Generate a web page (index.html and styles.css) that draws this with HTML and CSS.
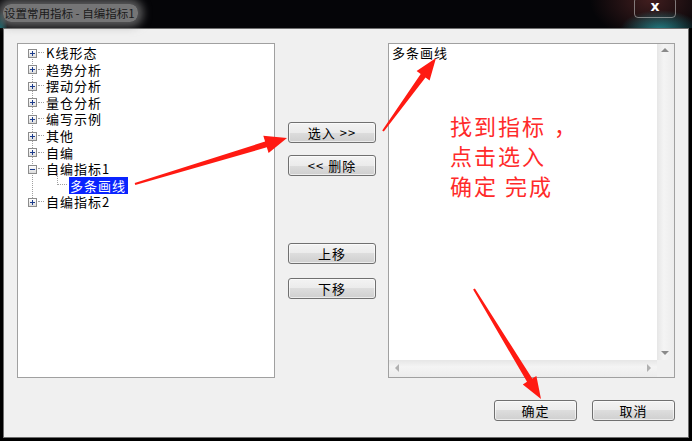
FILE: index.html
```html
<!DOCTYPE html>
<html lang="zh-CN">
<head>
  <meta charset="UTF-8">
  <meta name="viewport" content="width=device-width, initial-scale=1.0">
  <title>设置常用指标 - 自编指标1</title>
  <link rel="stylesheet" href="styles.css">
</head>
<body>
<div class="titlebar">
  <span class="title">设置常用指标 - 自编指标1</span>
  <div class="close-btn">x</div>
</div>

<div class="window">
  <div class="main-row">
    <!-- albero degli indicatori -->
    <div class="tree-box">
      <ul class="tree">
        <li><span class="exp plus"></span><span class="dash"></span><span class="label">K线形态</span></li>
        <li><span class="exp plus"></span><span class="dash"></span><span class="label">趋势分析</span></li>
        <li><span class="exp plus"></span><span class="dash"></span><span class="label">摆动分析</span></li>
        <li><span class="exp plus"></span><span class="dash"></span><span class="label">量仓分析</span></li>
        <li><span class="exp plus"></span><span class="dash"></span><span class="label">编写示例</span></li>
        <li><span class="exp plus"></span><span class="dash"></span><span class="label">其他</span></li>
        <li><span class="exp plus"></span><span class="dash"></span><span class="label">自编</span></li>
        <li><span class="exp minus"></span><span class="dash"></span><span class="label">自编指标1</span></li>
        <li class="child"><span class="elbow"></span><span class="label selected">多条画线</span></li>
        <li><span class="exp plus"></span><span class="dash"></span><span class="label">自编指标2</span></li>
      </ul>
    </div>

    <div class="mid-buttons">
      <button class="btn btn-add">选入 &gt;&gt;</button>
      <button class="btn btn-del">&lt;&lt; 删除</button>
      <button class="btn btn-up">上移</button>
      <button class="btn btn-down">下移</button>
    </div>

    <div class="list-box">
      <div class="list-area">
        <div class="list-item">多条画线</div>
        <div class="note">找到指标<span class="comma">，</span><br>点击选入<br>确定 完成</div>
      </div>
      <div class="vscroll">
        <span class="arr arr-up"></span>
        <span class="arr arr-down"></span>
      </div>
      <div class="hscroll">
        <span class="arr arr-left"></span>
        <span class="arr arr-right"></span>
      </div>
      <div class="corner"></div>
    </div>
  </div>

  <div class="bottom-row">
    <button class="btn btn-ok">确定</button>
    <button class="btn btn-cancel">取消</button>
  </div>
</div>

<!-- frecce rosse di annotazione -->
<svg class="arrows" width="692" height="441" viewBox="0 0 692 441">
  <polygon points="135.3,185.0 266.8,147.3 268.6,153.0 287,138 263.3,135.8 265.1,141.5 134.7,183.0" />
  <polygon points="383.8,131.6 425.5,77.6 429.6,80.5 436,58 416.6,71.1 420.7,74.0 382.2,130.4" />
  <polygon points="473.1,289.5 527.0,381.8 522.8,384.4 541,399 536.4,376.0 532.2,378.6 474.9,288.5" />
</svg>
</body>
</html>
```

FILE: styles.css
```css
body {
  margin: 0;
  padding: 0;
  width: 692px;
  height: 441px;
  overflow: hidden;
  background-color: #000;
  font-family: "Noto Sans CJK SC", "DejaVu Sans", sans-serif;
  font-size: 13px;
  color: #000;
  position: relative;
}

.titlebar {
  height: 28px;
  position: relative;
  background:
    radial-gradient(ellipse 8px 26px at 0 36px, rgba(40, 200, 210, 0.7), transparent),
    radial-gradient(ellipse 40px 20px at 660px 30px, rgba(40, 200, 210, 0.6), transparent),
    radial-gradient(ellipse 60px 40px at 650px 0, rgba(90, 40, 40, 0.7), transparent),
    #050508;
}

.title {
  position: absolute;
  left: 3px;
  top: 4px;
  font-size: 11.5px;
  line-height: 18px;
  color: #1a1a1a;
  padding: 0 3px 0 1px;
  background: rgba(165, 165, 165, 0.7);
  border-radius: 8px;
  box-shadow: 0 0 8px 5px rgba(150, 150, 150, 0.6);
}

.close-btn {
  position: absolute;
  left: 634px;
  top: -3px;
  width: 40px;
  height: 19px;
  border: 1px solid rgba(190, 190, 190, 0.6);
  border-radius: 4px;
  color: #fff;
  font-family: "DejaVu Sans", sans-serif;
  font-weight: bold;
  font-size: 14px;
  line-height: 17px;
  text-align: center;
}

.window {
  margin: 0 3px;
  border: 1px solid #6e6e6e;
  background-color: #f0f0f0;
  padding: 14px 13px 0 13px;
  box-sizing: border-box;
  width: 686px;
  height: 410px;
}

.main-row {
  display: flex;
  height: 335px;
}

.tree-box {
  width: 258px;
  box-sizing: border-box;
  border: 1px solid #a0a0a0;
  background: #fff;
}

.tree {
  list-style: none;
  margin: 0;
  padding: 1px 0 0 10px;
  background-image: repeating-linear-gradient(to bottom, #a0a0a0 0 1px, transparent 1px 2px);
  background-repeat: no-repeat;
  background-size: 1px 149px;
  background-position: 14px 9px;
}

.tree li {
  height: 16.55px;
  display: flex;
  align-items: center;
  white-space: nowrap;
}

.exp {
  width: 9px;
  height: 9px;
  box-sizing: border-box;
  border: 1px solid #8c8c8c;
  background: linear-gradient(#ffffff, #dcdcdc);
  position: relative;
  flex: none;
}

.exp::before {
  content: "";
  position: absolute;
  left: 1px;
  top: 3px;
  width: 5px;
  height: 1px;
  background: #1c3c8c;
}

.plus::after {
  content: "";
  position: absolute;
  left: 3px;
  top: 1px;
  width: 1px;
  height: 5px;
  background: #1c3c8c;
}

.dash {
  width: 6px;
  height: 1px;
  margin: 0 1px;
  border-top: 1px dotted #a0a0a0;
  flex: none;
}

.label {
  line-height: 16px;
  padding: 0 1px;
  letter-spacing: 1px;
}

.tree li.child {
  align-items: flex-start;
}

.elbow {
  width: 10px;
  height: 12px;
  margin: -4px 2px 0 29px;
  flex: none;
  box-sizing: border-box;
  border-left: 1px dotted #a0a0a0;
  border-bottom: 1px dotted #a0a0a0;
}

.selected {
  background: #0a24ff;
  color: #fff;
  padding: 0 2px 0 1px;
  line-height: 17px;
}

.mid-buttons {
  width: 88px;
  margin: 0 12px 0 13px;
  display: flex;
  flex-direction: column;
}

.btn {
  font-family: "Noto Sans CJK SC", "DejaVu Sans", sans-serif;
  font-size: 13px;
  letter-spacing: 1px;
  color: #000;
  height: 21px;
  padding: 0;
  line-height: 17px;
  border: 1px solid #707070;
  border-radius: 3px;
  background: linear-gradient(#f3f3f3 0%, #ebebeb 50%, #dddddd 50%, #cfcfcf 100%);
  box-shadow: inset 0 0 0 1px rgba(255, 255, 255, 0.6);
}

.btn-add { margin-top: 79px; }
.btn-del { margin-top: 12px; }
.btn-up { margin-top: 67px; }
.btn-down { margin-top: 14px; }

.list-box {
  width: 287px;
  box-sizing: border-box;
  border: 1px solid #a0a0a0;
  background: #fff;
  display: grid;
  grid-template-columns: 1fr 17px;
  grid-template-rows: 1fr 17px;
}

.list-area {
  padding: 0 3px;
}

.list-item {
  line-height: 17px;
  letter-spacing: 1px;
}

.note {
  margin: 49px 0 0 58px;
  color: #ff2a2a;
  font-size: 22px;
  letter-spacing: 2px;
  line-height: 30px;
}

.comma {
  padding-left: 8px;
}

.vscroll {
  background: linear-gradient(to right, #e6e6e6, #f4f4f4 40%, #ececec);
  position: relative;
}

.hscroll {
  background: linear-gradient(#e6e6e6, #f4f4f4 40%, #ececec);
  position: relative;
}

.corner {
  background: #f0f0f0;
}

.arr {
  position: absolute;
  width: 0;
  height: 0;
  border: 4px solid transparent;
}

.arr-up {
  left: 4px;
  top: 4px;
  border-bottom-color: #8a8a8a;
  border-top-width: 0;
}

.arr-down {
  left: 4px;
  bottom: 5px;
  border-top-color: #8a8a8a;
  border-bottom-width: 0;
}

.arr-left {
  left: 6px;
  top: 4px;
  border-right-color: #b0b0b0;
  border-left-width: 0;
}

.arr-right {
  right: 6px;
  top: 4px;
  border-left-color: #b0b0b0;
  border-right-width: 0;
}

.bottom-row {
  display: flex;
  justify-content: flex-end;
  gap: 15px;
  margin-top: 22px;
}

.btn-ok,
.btn-cancel {
  width: 83px;
}

.arrows {
  position: absolute;
  left: 0;
  top: 0;
  pointer-events: none;
}

.arrows polygon {
  fill: #ff1a12;
}
```
